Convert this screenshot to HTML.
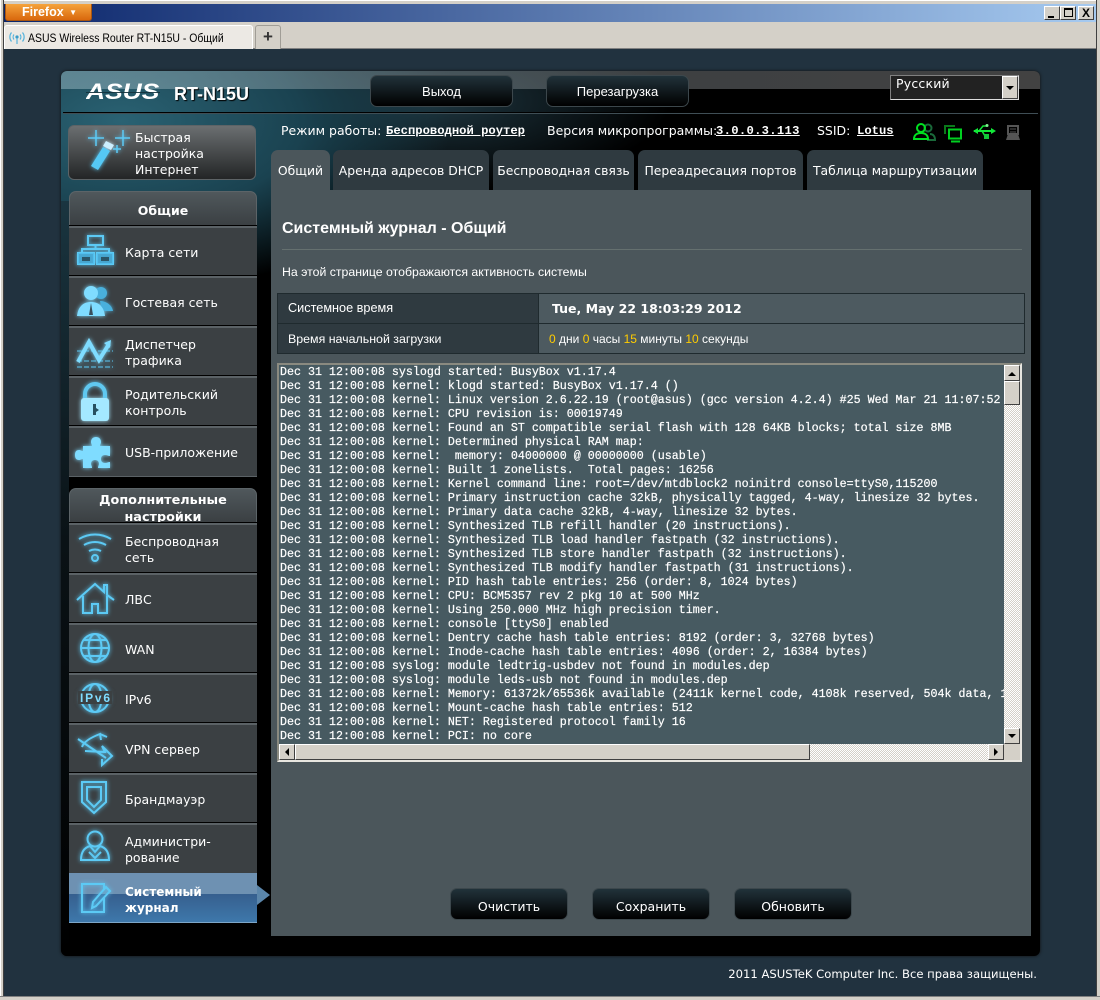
<!DOCTYPE html>
<html><head><meta charset="utf-8"><title>ASUS Wireless Router RT-N15U - Общий</title>
<style>
*{box-sizing:border-box}
html,body{margin:0;padding:0;width:1100px;height:1000px;overflow:hidden;background:#21323f}
body{position:relative;font-family:"DejaVu Sans","Liberation Sans",sans-serif;color:#fff}
.a{position:absolute}
.t{position:absolute;white-space:nowrap;font-size:12.5px;color:#fff;line-height:16px}
.btn{position:absolute;border-radius:7px;background:linear-gradient(#21323a,#000);border:1px solid #3c474c;text-align:center;font-size:12.5px;color:#fff}
.tab{position:absolute;top:150px;height:40px;background:#2f3a40;border-radius:7px 7px 0 0;text-align:center;font-size:12.4px;line-height:41px;white-space:nowrap;color:#fff}
.mi{position:absolute;left:69px;width:188px;height:50px;background:#3b4043;border-top:2px solid #5b6266;box-shadow:0 -1px 0 #000}
.mi span{position:absolute;left:56px;font-size:12.5px;line-height:16px;white-space:nowrap}
.mh{position:absolute;left:69px;width:188px;background:linear-gradient(#50585c,#3a3f42);border-radius:7px 7px 0 0;border:1px solid #5c6468;border-bottom:0;text-align:center;font-weight:bold;font-size:12.8px;line-height:17px;overflow:hidden}
.ic{position:absolute;left:74px;width:42px;height:42px;overflow:visible}
.s{fill:none;stroke:#5ccaf5;stroke-width:2}
.f{fill:#7fdcff}
.ch{background:repeating-conic-gradient(#fff 0 25%,#d4d0c8 0 50%) 0 0/2px 2px}
.sb{position:absolute;background:#d4d0c8;border-top:1px solid #fff;border-left:1px solid #fff;border-right:1px solid #404040;border-bottom:1px solid #404040}
pre{margin:0;font-family:"Liberation Mono",monospace;font-size:11.67px;line-height:14px;color:#fff;-webkit-text-stroke:.2px #fff}
.u{position:absolute;top:123px;font:bold 12.2px/16px "Liberation Mono",monospace;text-decoration:underline;white-space:nowrap}
</style></head><body>
<svg width="0" height="0" style="position:absolute"><defs><filter id="g" x="-40%" y="-40%" width="180%" height="180%"><feGaussianBlur stdDeviation="2.2" result="b"/><feMerge><feMergeNode in="b"/><feMergeNode in="SourceGraphic"/></feMerge></filter></defs></svg>

<!-- browser chrome -->
<div class="a" style="left:0;top:0;width:1100px;height:4px;background:#d4d0c8;border-top:1px solid #fff"></div>
<div class="a" style="left:4px;top:4px;width:1092px;height:18px;background:linear-gradient(90deg,#0a246a,#a6caf0)"></div>
<div class="a" style="left:5px;top:4px;width:87px;height:17px;background:linear-gradient(#f5a33c,#d9680d);border-radius:0 0 3px 3px;border:1px solid #a85510;border-top:0;font-family:'Liberation Sans',sans-serif;font-weight:bold;font-size:12.5px;line-height:16px;padding-left:16px;white-space:nowrap">Firefox <span style="font-size:8px;vertical-align:1px;margin-left:2px">▼</span></div>
<div class="sb" style="left:1044px;top:6px;width:16px;height:14px"><div class="a" style="left:3px;top:9px;width:6px;height:2px;background:#000"></div></div>
<div class="sb" style="left:1060px;top:6px;width:16px;height:14px"><div class="a" style="left:3px;top:1px;width:9px;height:9px;border:1px solid #000;border-top-width:2px"></div></div>
<div class="sb" style="left:1078px;top:6px;width:16px;height:14px;font:bold 12px/12px 'Liberation Sans',sans-serif;color:#000;text-align:center">X</div>
<div class="a" style="left:4px;top:22px;width:1092px;height:27px;background:#d4d0c8;border-bottom:1px solid #808080"></div>
<div class="a" style="left:4px;top:25px;width:249px;height:24px;background:#ece9e4;border:1px solid #fff;border-bottom:0;border-radius:3px 3px 0 0"></div>
<div class="a" style="left:28px;top:25px;font-family:'Liberation Sans',sans-serif;font-size:12px;line-height:26px;color:#000;white-space:nowrap;transform:scaleX(.871);transform-origin:0 50%">ASUS Wireless Router RT-N15U - Общий</div>
<svg class="a" style="left:9px;top:31px" width="16" height="14"><circle cx="8" cy="6" r="1.6" fill="#3a9cc8"/><path d="M5 3.500a4 4 0 0 0 0 5M11 3.500a4 4 0 0 1 0 5M2.500 1.500a7 7 0 0 0 0 9M13.500 1.500a7 7 0 0 1 0 9M8 7v6" fill="none" stroke="#55b3dc" stroke-width="1.200"/></svg>
<div class="a" style="left:255px;top:25px;width:26px;height:24px;background:#d4d0c8;border:1px solid #a09d96;border-bottom:0;border-radius:3px 3px 0 0;color:#333;font:bold 17px/22px 'Liberation Sans',sans-serif;text-align:center">+</div>
<div class="a" style="left:0;top:0;width:4px;height:1000px;background:#d4d0c8;border-left:1px solid #fff;border-right:1px solid #404040"></div>
<div class="a" style="left:1096px;top:0;width:4px;height:1000px;background:#d4d0c8;border-left:1px solid #404040"></div>
<div class="a" style="left:0;top:996px;width:1100px;height:4px;background:#d4d0c8;border-top:1px solid #808080"></div>

<!-- main panel -->
<div class="a" style="left:61px;top:71px;width:979px;height:885px;background:#000;border-radius:6px;overflow:hidden;box-shadow:0 0 3px #111;">
  <div class="a" style="left:0;top:0;width:979px;height:320px;background:radial-gradient(ellipse 330px 170px at 60px 50px,#2a6273 0,#1a4250 55%,rgba(0,0,0,0) 100%),radial-gradient(ellipse 240px 90px at 370px 30px,#1e3640 0,rgba(0,0,0,0) 100%)"></div>
  <div class="a" style="left:0;top:130px;width:8px;height:755px;background:linear-gradient(#1a3540,#0a1216 45%,#000)"></div>
  <div class="a" style="left:0;top:0;width:979px;height:18px;background:linear-gradient(90deg,rgba(170,200,210,.45),rgba(140,150,155,.42) 40%,rgba(120,120,120,.55));"></div>
  <div class="a" style="left:2px;top:41px;width:975px;height:1px;background:#000"></div>
  <div class="a" style="left:2px;top:42px;width:975px;height:1px;background:#3f4e55"></div>
</div>

<!-- logo -->
<div class="a" style="left:86px;top:75px;width:74px;height:34px;overflow:hidden">
  <div class="a" style="left:0;top:0;font:italic bold 22px/34px 'Liberation Sans',sans-serif;color:#fff;transform:scaleX(1.200);transform-origin:0 50%;white-space:nowrap">ASUS</div>
  <div class="a" style="left:0;top:17px;width:74px;height:1px;background:rgba(20,50,60,.9)"></div>
</div>
<div class="a" style="left:174px;top:83px;font:bold 18px/22px 'Liberation Sans',sans-serif;color:#fff;text-shadow:1px 1px 1px #000;white-space:nowrap">RT-N15U</div>

<div class="btn" style="left:370px;top:75px;width:143px;height:32px;line-height:32px;font-family:'Liberation Sans',sans-serif;font-size:13px">Выход</div>
<div class="btn" style="left:546px;top:75px;width:143px;height:32px;line-height:32px;font-family:'Liberation Sans',sans-serif;font-size:13px">Перезагрузка</div>

<!-- language select -->
<div class="a" style="left:890px;top:75px;width:129px;height:25px;background:#222;border:1px solid #808080;border-right-color:#ddd;border-bottom-color:#ddd;font-size:12.5px;line-height:16px;padding-left:5px;letter-spacing:.2px">Русский</div>
<div class="sb" style="left:1002px;top:76px;width:16px;height:23px"><div class="a" style="left:3px;top:9px;border:4px solid transparent;border-top:4px solid #000"></div></div>

<!-- quick -->
<div class="a" style="left:68px;top:125px;width:188px;height:55px;background:linear-gradient(#6b6f71,#232526);border:1px solid #5d6366;border-radius:6px"></div>
<svg class="a" style="left:85px;top:128px" width="45" height="48" filter="url(#g)"><path d="M3 10h16M11 2v16M30 10h16M38 2v16M28 21h8M32 17v8" stroke="#5ccaf5" stroke-width="1.500" fill="none"/><path d="M21 13l8 4-3 5-8-4z" fill="#cdefff"/><path d="M18 19l7 4-12 19-7-4z" fill="#55c8f5"/></svg>
<div class="t" style="left:135px;top:130px">Быстрая<br>настройка<br>Интернет</div>

<!-- status -->
<div class="t" style="left:281px;top:123px">Режим работы:</div>
<div class="u" style="left:386px">Беспроводной роутер</div>
<div class="t" style="left:547px;top:123px">Версия микропрограммы:</div>
<div class="u" style="left:716px;letter-spacing:.3px">3.0.0.3.113</div>
<div class="t" style="left:817px;top:123px">SSID:</div>
<div class="u" style="left:857px">Lotus</div>
<svg class="a" style="left:910px;top:120px" width="115" height="24" fill="none" stroke-width="2">
<circle cx="18" cy="8" r="3.500" stroke="#1a6a3a"/><path d="M17 20h8c0-4-2-6-5-6" stroke="#1a6a3a"/>
<circle cx="11" cy="8" r="4" stroke="#00e020"/><path d="M4 19c0-4 3-6 7-6s7 2 7 6z" stroke="#00e020"/>
<path d="M35 14v-8h10" stroke="#0a7a1a"/><rect x="39" y="9.500" width="12" height="9" stroke="#00d020"/><path d="M41 21.500h9" stroke="#00d020"/>
<path d="M64 11h20" stroke="#12e838"/><path d="M63 11l5-3v6zM86 11l-5-3v6z" fill="#12e838" stroke="none"/><path d="M69 11l4-5h3M72 11l3 5h2" stroke="#12e838" stroke-width="1.500"/><circle cx="77" cy="5.500" r="1.500" fill="#7ff08f" stroke="none"/><rect x="74" y="14" width="5" height="5" fill="#12c838" stroke="none"/>
<path d="M98 6h10v8h-10z" stroke="#555"/><path d="M96 20l2-6h10l2 6z" fill="#555" stroke="none"/><path d="M100 9h6M100 12h6" stroke="#555" stroke-width="1"/>
</svg>

<!-- tabs -->
<div class="tab" style="left:271px;width:59px;background:#4b565b">Общий</div>
<div class="tab" style="left:333px;width:156px">Аренда адресов DHCP</div>
<div class="tab" style="left:493px;width:141px">Беспроводная связь</div>
<div class="tab" style="left:638px;width:165px">Переадресация портов</div>
<div class="tab" style="left:807px;width:176px">Таблица маршрутизации</div>

<!-- content -->
<div class="a" style="left:271px;top:190px;width:760px;height:746px;background:#4b565b"></div>
<div class="a" style="left:282px;top:220px;font:bold 16px/18px 'Liberation Sans',sans-serif;white-space:nowrap">Системный журнал - Общий</div>
<div class="a" style="left:282px;top:249px;width:740px;height:1px;background:#65706f"></div>
<div class="a" style="left:282px;top:265px;font:12.3px/15px 'Liberation Sans',sans-serif;white-space:nowrap">На этой странице отображаются активность системы</div>

<div class="a" style="left:277px;top:293px;width:748px;height:61px;background:#4d5a60;border:1px solid #1f2a2e"></div>
<div class="a" style="left:278px;top:294px;width:261px;height:59px;background:#2f3a40;border-right:1px solid #1f2a2e"></div>
<div class="a" style="left:278px;top:323px;width:746px;height:1px;background:#1f2a2e"></div>
<div class="a" style="left:288px;top:301px;font:12.7px/15px 'Liberation Sans',sans-serif;white-space:nowrap">Системное время</div>
<div class="a" style="left:288px;top:332px;font:12.4px/15px 'Liberation Sans',sans-serif;white-space:nowrap">Время начальной загрузки</div>
<div class="a" style="left:552px;top:301px;font:bold 12.5px/16px 'DejaVu Sans',sans-serif;white-space:nowrap">Tue, May 22 18:03:29 2012</div>
<div class="a" style="left:549px;top:332px;font:12px/15px 'Liberation Sans',sans-serif;white-space:nowrap"><span style="color:#ffcc00">0</span> дни <span style="color:#ffcc00">0</span> часы <span style="color:#ffcc00">15</span> минуты <span style="color:#ffcc00">10</span> секунды</div>

<!-- log -->
<div class="a" style="left:277px;top:363px;width:745px;height:399px;background:#475a61;border-top:2px solid #8a8a80;border-left:2px solid #8a8a80;border-right:2px solid #e8e6e0;border-bottom:2px solid #e8e6e0"></div>
<div class="a" style="left:280px;top:365px;width:724px;height:379px;overflow:hidden"><pre>Dec 31 12:00:08 syslogd started: BusyBox v1.17.4
Dec 31 12:00:08 kernel: klogd started: BusyBox v1.17.4 ()
Dec 31 12:00:08 kernel: Linux version 2.6.22.19 (root@asus) (gcc version 4.2.4) #25 Wed Mar 21 11:07:52 CST 2012
Dec 31 12:00:08 kernel: CPU revision is: 00019749
Dec 31 12:00:08 kernel: Found an ST compatible serial flash with 128 64KB blocks; total size 8MB
Dec 31 12:00:08 kernel: Determined physical RAM map:
Dec 31 12:00:08 kernel:  memory: 04000000 @ 00000000 (usable)
Dec 31 12:00:08 kernel: Built 1 zonelists.  Total pages: 16256
Dec 31 12:00:08 kernel: Kernel command line: root=/dev/mtdblock2 noinitrd console=ttyS0,115200
Dec 31 12:00:08 kernel: Primary instruction cache 32kB, physically tagged, 4-way, linesize 32 bytes.
Dec 31 12:00:08 kernel: Primary data cache 32kB, 4-way, linesize 32 bytes.
Dec 31 12:00:08 kernel: Synthesized TLB refill handler (20 instructions).
Dec 31 12:00:08 kernel: Synthesized TLB load handler fastpath (32 instructions).
Dec 31 12:00:08 kernel: Synthesized TLB store handler fastpath (32 instructions).
Dec 31 12:00:08 kernel: Synthesized TLB modify handler fastpath (31 instructions).
Dec 31 12:00:08 kernel: PID hash table entries: 256 (order: 8, 1024 bytes)
Dec 31 12:00:08 kernel: CPU: BCM5357 rev 2 pkg 10 at 500 MHz
Dec 31 12:00:08 kernel: Using 250.000 MHz high precision timer.
Dec 31 12:00:08 kernel: console [ttyS0] enabled
Dec 31 12:00:08 kernel: Dentry cache hash table entries: 8192 (order: 3, 32768 bytes)
Dec 31 12:00:08 kernel: Inode-cache hash table entries: 4096 (order: 2, 16384 bytes)
Dec 31 12:00:08 syslog: module ledtrig-usbdev not found in modules.dep
Dec 31 12:00:08 syslog: module leds-usb not found in modules.dep
Dec 31 12:00:08 kernel: Memory: 61372k/65536k available (2411k kernel code, 4108k reserved, 504k data, 172k init)
Dec 31 12:00:08 kernel: Mount-cache hash table entries: 512
Dec 31 12:00:08 kernel: NET: Registered protocol family 16
Dec 31 12:00:08 kernel: PCI: no core
</pre></div>
<div class="a ch" style="left:1004px;top:365px;width:16px;height:379px"></div>
<div class="sb" style="left:1004px;top:365px;width:16px;height:16px"><div class="a" style="left:3px;top:2px;border:4px solid transparent;border-bottom:4px solid #000"></div></div>
<div class="sb" style="left:1004px;top:381px;width:16px;height:24px"></div>
<div class="sb" style="left:1004px;top:728px;width:16px;height:16px"><div class="a" style="left:3px;top:5px;border:4px solid transparent;border-top:4px solid #000"></div></div>
<div class="a ch" style="left:279px;top:744px;width:725px;height:16px"></div>
<div class="sb" style="left:279px;top:744px;width:16px;height:16px"><div class="a" style="left:1px;top:3px;border:4px solid transparent;border-right:4px solid #000"></div></div>
<div class="sb" style="left:295px;top:744px;width:515px;height:16px"></div>
<div class="sb" style="left:988px;top:744px;width:16px;height:16px"><div class="a" style="left:5px;top:3px;border:4px solid transparent;border-left:4px solid #000"></div></div>
<div class="a" style="left:1004px;top:744px;width:16px;height:16px;background:#d4d0c8"></div>

<div class="btn" style="left:450px;top:888px;width:118px;height:32px;line-height:36px">Очистить</div>
<div class="btn" style="left:592px;top:888px;width:118px;height:32px;line-height:36px">Сохранить</div>
<div class="btn" style="left:734px;top:888px;width:118px;height:32px;line-height:36px">Обновить</div>

<div class="a" style="right:63px;top:966px;font-size:11.6px;line-height:16px;white-space:nowrap">2011 ASUSTeK Computer Inc. Все права защищены.</div>

<!-- menu 1 -->
<div class="mh" style="top:191px;height:35px;line-height:37px;font-size:12.5px">Общие</div>
<div class="mi" style="top:226px"><span style="top:17px">Карта сети</span></div>
<div class="mi" style="top:276px"><span style="top:17px">Гостевая сеть</span></div>
<div class="mi" style="top:326px"><span style="top:9px">Диспетчер<br>трафика</span></div>
<div class="mi" style="top:376px"><span style="top:9px">Родительский<br>контроль</span></div>
<div class="mi" style="top:426px;height:51px;border-bottom:1px solid #5b6266"><span style="top:17px">USB-приложение</span></div>

<svg class="ic" style="top:232px" viewBox="0 0 42 42" filter="url(#g)"><path d="M14 4h15v9H14zM21.500 13v4M8 21v-4h27v4M4 21h16v11H4zM23 21h16v11H23z" class="s" stroke-width="2.500"/><path d="M4 21h16v11H4zM23 21h16v11H23z" fill="#4ab8e8" opacity=".6"/><path d="M8 25h8v4H8zM27 25h8v4h-8z" fill="#2b5668"/></svg>
<svg class="ic" style="top:282px" viewBox="0 0 42 42" filter="url(#g)"><circle cx="27" cy="11" r="6" fill="#4ab0dc"/><path d="M26 19c6 0 12 4 13 10H28z" fill="#4ab0dc"/><circle cx="17" cy="11" r="7" class="f"/><path d="M3 34c1-9 6-14 14-14s13 5 14 14z" class="f"/><path d="M17 21l-2 12h4z" fill="#39505c"/></svg>
<svg class="ic" style="top:332px" viewBox="0 0 42 42" filter="url(#g)"><path d="M3 29h36M3 35h36M3 19h36" stroke="#5ccaf5" stroke-dasharray="5 2" fill="none"/><path d="M4 30L15 10l10 18 10-16" fill="none" stroke="#7fdcff" stroke-width="4"/><path d="M30 11l7-3-1 8z" fill="#7fdcff"/></svg>
<svg class="ic" style="top:382px" viewBox="0 0 42 42" filter="url(#g)"><path d="M11 17v-5a10 10 0 0 1 20 0v5" fill="none" stroke="#60c8f0" stroke-width="4"/><rect x="7" y="16" width="28" height="23" rx="3" fill="#a4e8ff"/><path d="M19 22h3v4l3 2-3 2v3h-3z" fill="#28505f"/></svg>
<svg class="ic" style="top:432px" viewBox="0 0 42 42" filter="url(#g)"><path d="M17 10c0-3 2-5 5-5s5 2 5 5c0 2-1 2-1 4h10v10c-2 0-3-1-5-1-3 0-4 2-4 4s1 4 4 4c2 0 3-1 5-1v6H24c0-2 1-3 1-4 0-3-2-4-4-4s-4 1-4 4c0 1 1 2 1 4H9v-9c-2 0-2 1-4 1-3 0-4-2-4-5s1-5 4-5c2 0 2 1 4 1V14h9c0-2-1-2-1-4z" fill="#7fdcff"/></svg>

<!-- menu 2 -->
<div class="mh" style="top:488px;height:35px;padding-top:3px">Дополнительные<br>настройки</div>
<div class="mi" style="top:523px"><span style="top:9px">Беспроводная<br>сеть</span></div>
<div class="mi" style="top:573px"><span style="top:17px">ЛВС</span></div>
<div class="mi" style="top:623px"><span style="top:17px">WAN</span></div>
<div class="mi" style="top:673px"><span style="top:17px">IPv6</span></div>
<div class="mi" style="top:723px"><span style="top:17px">VPN сервер</span></div>
<div class="mi" style="top:773px"><span style="top:17px">Брандмауэр</span></div>
<div class="mi" style="top:823px"><span style="top:9px">Администри-<br>рование</span></div>
<div class="a" style="left:69px;top:873px;width:188px;height:50px;background:linear-gradient(#6e91b2 0,#6e91b2 43%,#365f8e 43%,#3e78ab 100%);border-bottom:1px solid #7ea6c8"></div>
<div class="a" style="left:257px;top:885px;border:10px solid transparent;border-left:13px solid #5b86ab;border-right:0"></div>
<div class="t" style="left:125px;top:884px;font-weight:bold;font-size:12px">Системный<br>журнал</div>

<svg class="ic" style="top:530px" viewBox="0 0 42 42" filter="url(#g)"><path d="M5 9c10-6 22-6 32 0M10 15c7-4 15-4 22 0M15 21c4-2 8-2 12 0" class="s" stroke-width="2.500"/><circle cx="21" cy="28" r="3" class="s"/></svg>
<svg class="ic" style="top:578px" viewBox="0 0 42 42" filter="url(#g)"><path d="M3 22L21 6l9 8V7h3v10l7 5M9 18v17h9v-9h6v9h9V18" class="s"/></svg>
<svg class="ic" style="top:628px" viewBox="0 0 42 42" filter="url(#g)"><circle cx="21" cy="20" r="14" class="s"/><ellipse cx="21" cy="20" rx="6.500" ry="14" class="s"/><path d="M7 20h28M9 12h24M9 28h24" class="s" stroke-width="1.500"/></svg>
<svg class="ic" style="top:678px" viewBox="0 0 42 42" filter="url(#g)"><circle cx="21" cy="20" r="14" class="s" stroke-width="1.500"/><ellipse cx="21" cy="20" rx="6.500" ry="14" class="s" stroke-width="1.200"/><rect x="4" y="13" width="34" height="13" fill="#3b4043"/><text x="21" y="24" text-anchor="middle" font-family="Liberation Sans" font-weight="bold" font-size="12" fill="#7fdcff" textLength="30">IPv6</text></svg>
<svg class="ic" style="top:728px" viewBox="0 0 42 42" filter="url(#g)"><path d="M4 11l28 19M8 19c2-6 10-10 18-13l1 6M26 6l7 3M11 23l20 1-3-6 10 10-10 9v-6" class="s"/></svg>
<svg class="ic" style="top:778px" viewBox="0 0 42 42" filter="url(#g)"><path d="M8 4h24v20L20 35 8 24z" class="s"/><path d="M13 9h14v13l-7 7-7-7z" class="s" stroke-width="1.500"/></svg>
<svg class="ic" style="top:828px" viewBox="0 0 42 42" filter="url(#g)"><circle cx="21" cy="11" r="7.500" class="s"/><path d="M7 32c0-6 2-12 9-14l5 6 5-6c7 2 9 8 9 14z" class="s"/><path d="M15 24l6 6 6-6" class="s" stroke-width="1.500"/></svg>
<svg class="ic" style="top:878px" viewBox="0 0 42 42" filter="url(#g)"><path d="M30 12V6H8v28h22V20" class="s" stroke="#4cc4f0"/><path d="M18 30l1-6L32 9l4 4-14 15z" class="s" stroke-width="1.800"/></svg>
</body></html>
